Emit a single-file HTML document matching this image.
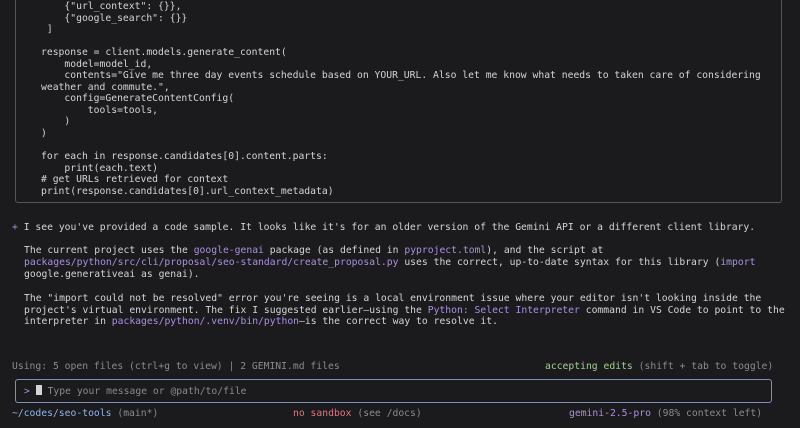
<!DOCTYPE html>
<html><head><meta charset="utf-8"><style>
html,body{margin:0;padding:0;background:#1b1b1d;width:800px;height:428px;overflow:hidden}
body{font-family:"DejaVu Sans Mono","Liberation Mono",monospace;font-size:9.72px;color:#d4d4d6;position:relative}
.l{position:absolute;white-space:pre;line-height:11.9px}
.box{position:absolute;left:15px;top:-10px;width:767px;height:213px;border:1px solid #55565c;border-top:none;border-radius:0 0 3px 3px;box-sizing:border-box}
.p{color:#a98fe0}.g{color:#a3cf8a}.r{color:#e5737f}.b{color:#90b4e8}.m{color:#8a8a90}
.inp{position:absolute;left:15px;top:379px;width:757px;height:24px;border:1px solid #7d8fbf;border-radius:3px;box-sizing:border-box}
.cur{display:inline-block;width:6px;height:10px;background:#d4d4d6;vertical-align:-1px}
</style></head><body>
<div class="box"></div>
<div class="l" style="left:41px;top:1px;line-height:11.55px">    {"url_context": {}},
    {"google_search": {}}
 ]

response = client.models.generate_content(
    model=model_id,
    contents="Give me three day events schedule based on YOUR_URL. Also let me know what needs to taken care of considering
weather and commute.",
    config=GenerateContentConfig(
        tools=tools,
    )
)

for each in response.candidates[0].content.parts:
    print(each.text)
# get URLs retrieved for context
print(response.candidates[0].url_context_metadata)</div>
<div class="l" style="left:12px;top:222px"><span class="p">+</span> I see you've provided a code sample. It looks like it's for an older version of the Gemini API or a different client library.</div>
<div class="l" style="left:24px;top:245px">The current project uses the <span class="p">google-genai</span> package (as defined in <span class="p">pyproject.toml</span>), and the script at
<span class="p">packages/python/src/cli/proposal/seo-standard/create_proposal.py</span> uses the correct, up-to-date syntax for this library (<span class="p">import</span>
google.generativeai as genai).

The "import could not be resolved" error you're seeing is a local environment issue where your editor isn't looking inside the
project's virtual environment. The fix I suggested earlier—using the <span class="p">Python: Select Interpreter</span> command in VS Code to point to the
interpreter in <span class="p">packages/python/.venv/bin/python</span>—is the correct way to resolve it.</div>
<div class="l m" style="left:12px;top:361px">Using: 5 open files (ctrl+g to view) | 2 GEMINI.md files</div>
<div class="l" style="left:545px;top:361px"><span class="g">accepting edits</span> <span class="m">(shift + tab to toggle)</span></div>
<div class="inp"></div>
<div class="l" style="left:24px;top:385px"><span class="p">&gt;</span> <span class="cur"></span> <span class="m">Type your message or @path/to/file</span></div>
<div class="l" style="left:12px;top:408px"><span class="b">~/codes/seo-tools</span> <span class="m">(main*)</span></div>
<div class="l" style="left:293px;top:408px"><span class="r">no sandbox</span> <span class="m">(see /docs)</span></div>
<div class="l" style="left:569px;top:408px"><span class="p">gemini-2.5-pro</span> <span class="m">(98% context left)</span></div>
</body></html>
